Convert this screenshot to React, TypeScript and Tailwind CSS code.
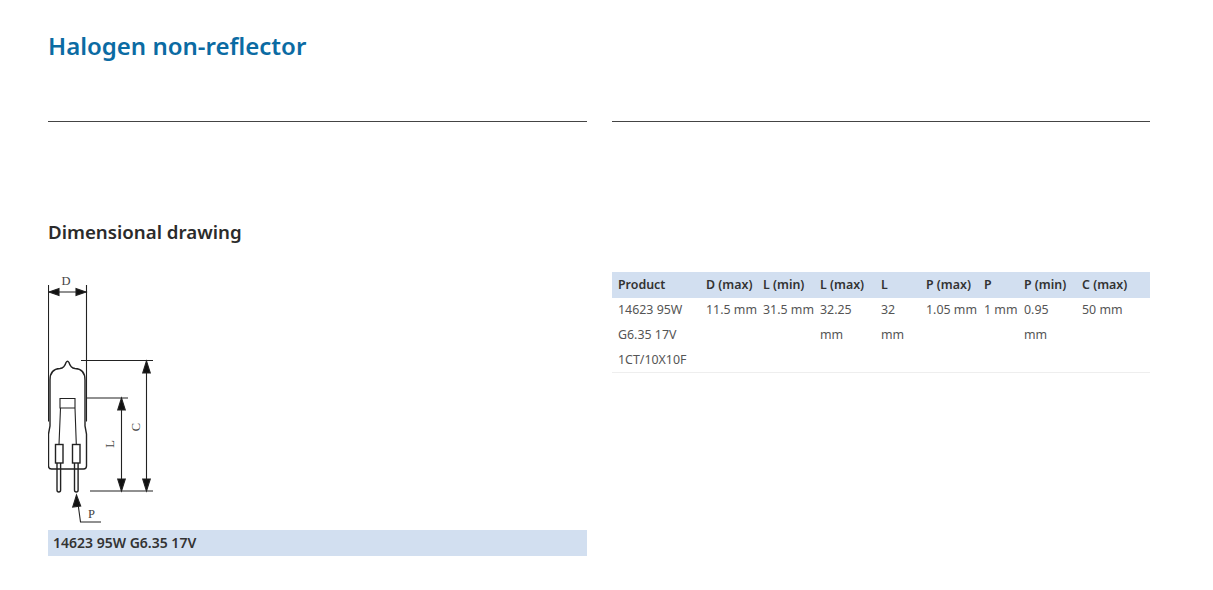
const headers = ['Product', 'D (max)', 'L (min)', 'L (max)', 'L', 'P (max)', 'P', 'P (min)', 'C (max)'];
const values = ['14623 95W G6.35 17V 1CT/10X10F', '11.5\u00a0mm', '31.5\u00a0mm', '32.25 mm', '32 mm', '1.05\u00a0mm', '1\u00a0mm', '0.95 mm', '50 mm'];
const widths = ['w-[88px]', 'w-[57px]', 'w-[57px]', 'w-[61px]', 'w-[45px]', 'w-[58px]', 'w-[40px]', 'w-[58px]', 'w-[74px]'];

function LampDrawing() {
  return (
    <svg width="120" height="250" viewBox="48 275 120 250" fill="none" stroke="#222" strokeWidth="1.1" className="block">
      <path d="M48.5 285V421.5M86.5 285V421.5" />
      <path d="M49 292H86" />
      <path d="M49 292l10-3.5v7zM86 292l-10-3.5v7z" fill="#111" />
      <path d="M81 360.5H153M87 398H128M90 491H153" />
      <path d="M146.5 361V491M121.5 398V491" />
      <path d="M146.5 361l-3.8 12h7.6zM146.5 491l-3.8-12h7.6zM121.5 398l-3.8 12h7.6zM121.5 491l-3.8-12h7.6z" fill="#111" />
      {/* bulb */}
      <g strokeWidth="1.4">
        <path d="M48.5 434V466Q48.5 469 51.5 469H83.5Q86.5 469 86.5 466V434L85 426V380Q85 369 75 368.5Q70.5 368 69 362.5Q67.5 360 66 362.5Q64.5 368 60 368.5Q50 369 50 380V426Z" />
        <rect x="55.5" y="444.5" width="7.5" height="18.5" />
        <rect x="72.5" y="444.5" width="7.5" height="18.5" />
        <path d="M57 463V490Q57 492 58.8 492Q60.6 492 60.6 490V463M74.5 463V490Q74.5 492 76.3 492Q78.1 492 78.1 490V463" />
      </g>
      <path d="M60 398.5H75V408H60ZM60.5 408L59 444.5M75 408L76.3 444.5" />
      {/* P leader */}
      <path d="M77.5 500L80.5 522H101" />
      <path d="M76.5 495l-3.8 12 8-1z" fill="#111" />
      <g fill="#444" stroke="none" fontFamily="'Liberation Serif', serif" fontSize="12.5">
        <text x="66" y="285" textAnchor="middle">D</text>
        <text x="91.5" y="517.5" textAnchor="middle">P</text>
        <text x="114" y="444" textAnchor="middle" transform="rotate(-90 114 444)">L</text>
        <text x="140" y="427" textAnchor="middle" transform="rotate(-90 140 427)">C</text>
      </g>
    </svg>
  );
}

export default function App() {
  return (
    <div className="w-[1213px] h-[590px] bg-white overflow-hidden pl-12 pr-[63px] pt-[32px] font-['Noto_Sans',sans-serif] text-[#333]">
      <h1 className="text-2xl leading-[28px] font-semibold text-[#0b6ba3]">Halogen non-reflector</h1>

      <div className="flex gap-[25px] mt-[61px]">
        <div className="w-[539px] border-t border-[#444]" />
        <div className="w-[538px] border-t border-[#444]" />
      </div>

      <div className="flex gap-[25px] mt-[98px]">
        <div className="w-[539px]">
          <h2 className="text-[18.7px] leading-6 font-semibold text-[#2b2b2b]">Dimensional drawing</h2>
          <div className="mt-[31px]">
            <LampDrawing />
          </div>
          <div className="mt-[5px] h-[26px] bg-[#d2dff0] pl-[5px] text-sm leading-[26px] font-semibold">14623 95W G6.35 17V</div>
        </div>

        <div className="w-[538px] pt-[52px]">
          <table className="w-full table-fixed text-[12.4px] leading-[25px] border-b border-[#eeeeee]">
            <thead>
              <tr className="bg-[#d2dff0] h-[26px]">
                {headers.map((h, i) => (
                  <th key={i} className={`${widths[i]} px-[6px] pb-px text-left font-semibold whitespace-nowrap`}>{h}</th>
                ))}
              </tr>
            </thead>
            <tbody>
              <tr>
                {values.map((v, i) => (
                  <td key={i} className="pl-[6px] pr-[3px] align-top text-[#555]">
                    <div className="-mt-px">{v}</div>
                  </td>
                ))}
              </tr>
            </tbody>
          </table>
        </div>
      </div>
    </div>
  );
}
